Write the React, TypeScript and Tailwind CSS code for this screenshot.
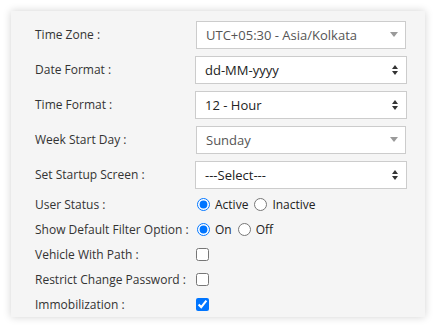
import { useState } from "react"

const font = { fontFamily: '"Open Sans", "Noto Sans", sans-serif' }

function FakeSelect({ value, disabled }: { value: string; disabled?: boolean }) {
  return (
    <div
      className={`flex items-center justify-between h-[28px] border border-[#cccccc] bg-white pr-[7px] text-[13px] ${
        disabled ? "w-[210px] ml-[1px] pl-[9px] text-[#555555]" : "w-[212px] pl-[9px] text-[#222222]"
      }`}
    >
      <span className="leading-none">{value}</span>
      {disabled ? (
        <svg width="8" height="6" viewBox="0 0 8 6" className="mr-[0px]">
          <path d="M0 0 H8 L4 5 Z" fill="#9a9a9a" />
        </svg>
      ) : (
        <svg width="8" height="12" viewBox="0 0 8 12" className="mr-[0px]">
          <path d="M1 5 L4 1 L7 5 Z" fill="#333333" />
          <path d="M1 7 L4 11 L7 7 Z" fill="#333333" />
        </svg>
      )}
    </div>
  )
}

function Row({ label, children, h }: { label: string; children: React.ReactNode; h: string }) {
  return (
    <div className={`flex items-center ${h}`}>
      <div className="w-[160px] shrink-0 text-[12px] text-[#333333]">{label}</div>
      {children}
    </div>
  )
}

export default function App() {
  const [status, setStatus] = useState("active")
  const [filter, setFilter] = useState("on")
  const [vehicle, setVehicle] = useState(false)
  const [restrict, setRestrict] = useState(false)
  const [immob, setImmob] = useState(true)

  return (
    <div className="bg-white w-[436px] h-[328px] p-[11px]" style={font}>
      <div className="w-[414px] h-[306px] bg-[#f5f5f5] shadow-[0_0_8px_rgba(0,0,0,0.18)] pl-[24px] pt-[10px]">
        {/* selects */}
        <div className="flex flex-col gap-[7px]">
          <Row label="Time Zone :" h="h-[28px]">
            <FakeSelect value="UTC+05:30 - Asia/Kolkata" disabled />
          </Row>
          <Row label="Date Format :" h="h-[28px]">
            <FakeSelect value="dd-MM-yyyy" />
          </Row>
          <Row label="Time Format :" h="h-[28px]">
            <FakeSelect value="12 - Hour" />
          </Row>
          <Row label="Week Start Day :" h="h-[28px]">
            <FakeSelect value="Sunday" disabled />
          </Row>
          <Row label="Set Startup Screen :" h="h-[28px]">
            <FakeSelect value="---Select---" />
          </Row>
        </div>

        {/* radios & checkboxes */}
        <div className="mt-[3px] text-[12px] text-[#222222]">
          <Row label="User Status :" h="h-[25px]">
            <label className="flex items-center gap-[5px] ml-[2px]">
              <input
                type="radio"
                checked={status === "active"}
                onChange={() => setStatus("active")}
                className="m-0 w-[13px] h-[13px]"
              />
              Active
            </label>
            <label className="flex items-center gap-[5px] ml-[6px]">
              <input
                type="radio"
                checked={status === "inactive"}
                onChange={() => setStatus("inactive")}
                className="m-0 w-[13px] h-[13px]"
              />
              Inactive
            </label>
          </Row>
          <Row label="Show Default Filter Option :" h="h-[25px]">
            <label className="flex items-center gap-[5px] ml-[2px]">
              <input
                type="radio"
                checked={filter === "on"}
                onChange={() => setFilter("on")}
                className="m-0 w-[13px] h-[13px]"
              />
              On
            </label>
            <label className="flex items-center gap-[5px] ml-[6px]">
              <input
                type="radio"
                checked={filter === "off"}
                onChange={() => setFilter("off")}
                className="m-0 w-[13px] h-[13px]"
              />
              Off
            </label>
          </Row>
          <Row label="Vehicle With Path :" h="h-[25px]">
            <input
              type="checkbox"
              checked={vehicle}
              onChange={(e) => setVehicle(e.target.checked)}
              className="m-0 ml-[1px] w-[13px] h-[13px]"
            />
          </Row>
          <Row label="Restrict Change Password :" h="h-[25px]">
            <input
              type="checkbox"
              checked={restrict}
              onChange={(e) => setRestrict(e.target.checked)}
              className="m-0 ml-[1px] w-[13px] h-[13px]"
            />
          </Row>
          <Row label="Immobilization :" h="h-[25px]">
            <input
              type="checkbox"
              checked={immob}
              onChange={(e) => setImmob(e.target.checked)}
              className="m-0 ml-[1px] w-[13px] h-[13px]"
            />
          </Row>
        </div>
      </div>
    </div>
  )
}
